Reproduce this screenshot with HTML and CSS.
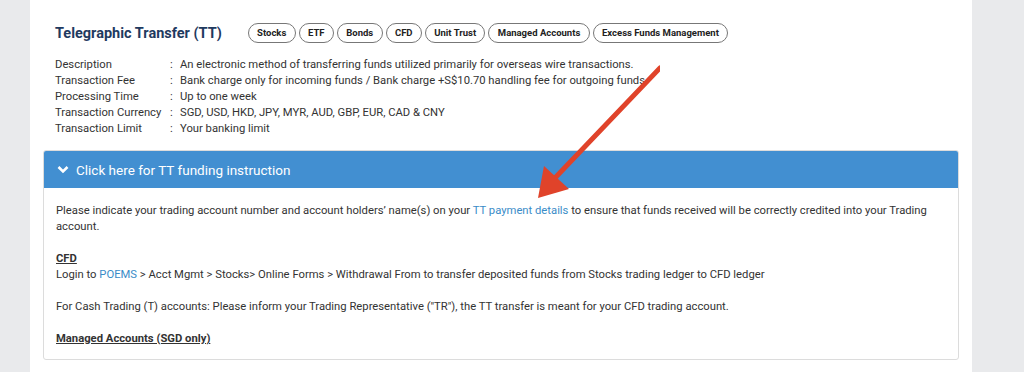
FILE: index.html
```html
<!DOCTYPE html>
<html lang="en">
<head>
  <meta charset="UTF-8" />
  <title>Telegraphic Transfer (TT)</title>
  <link rel="stylesheet" href="styles.css">
</head>
<body>
  <div class="page">
    <div class="card">
      <div class="title-row">
        <h2 class="title">Telegraphic Transfer (TT)</h2>
        <div class="pills">
          <span class="pill">Stocks</span>
          <span class="pill">ETF</span>
          <span class="pill">Bonds</span>
          <span class="pill">CFD</span>
          <span class="pill">Unit Trust</span>
          <span class="pill">Managed Accounts</span>
          <span class="pill">Excess Funds Management</span>
        </div>
      </div>

      <div class="info">
        <div class="k">Description</div><div class="c">:</div><div class="v">An electronic method of transferring funds utilized primarily for overseas wire transactions.</div>
        <div class="k">Transaction Fee</div><div class="c">:</div><div class="v">Bank charge only for incoming funds / Bank charge +S$10.70 handling fee for outgoing funds</div>
        <div class="k">Processing Time</div><div class="c">:</div><div class="v">Up to one week</div>
        <div class="k">Transaction Currency</div><div class="c">:</div><div class="v">SGD, USD, HKD, JPY, MYR, AUD, GBP, EUR, CAD &amp; CNY</div>
        <div class="k">Transaction Limit</div><div class="c">:</div><div class="v">Your banking limit</div>
      </div>

      <!-- accordion -->
      <div class="panel">
        <div class="panel-head">
          <svg class="chev" width="12" height="9" viewBox="0 0 12 9"><path d="M1.5 2 L6 6.5 L10.5 2" fill="none" stroke="#fff" stroke-width="2.6"/></svg>
          <span>Click here for TT funding instruction</span>
        </div>
        <div class="panel-body">
          <p>Please indicate your trading account number and account holders’ name(s) on your <a href="#">TT payment details</a> to ensure that funds received will be correctly credited into your Trading account.</p>
          <p><b class="u">CFD</b><br>Login to <a href="#">POEMS</a> &gt; Acct Mgmt &gt; Stocks&gt; Online Forms &gt; Withdrawal From to transfer deposited funds from Stocks trading ledger to CFD ledger</p>
          <p>For Cash Trading (T) accounts: Please inform your Trading Representative ("TR"), the TT transfer is meant for your CFD trading account.</p>
          <p><b class="u">Managed Accounts (SGD only)</b></p>
        </div>
      </div>

      <svg class="arrow" width="140" height="150" viewBox="520 55 140 150">
        <line x1="660" y1="68" x2="553" y2="180" stroke="#e0432a" stroke-width="5" stroke-linecap="round"/>
        <polygon points="538,198 544,166 569,189" fill="#e0432a"/>
      </svg>
    </div>
  </div>
</body>
</html>
```

FILE: styles.css
```css
body {
  margin: 0;
  background: #e9eaec;
  font-family: Roboto, "Liberation Sans", sans-serif;
  color: #2b2b2b;
}

.page {
  padding: 0 52px 0 30px;
}

.card {
  position: relative;
  background: #fff;
  height: 372px;
  padding: 23px 13px 0 13px;
  box-sizing: border-box;
}

.title-row {
  display: flex;
  align-items: center;
  padding-left: 12px;
  gap: 26px;
  height: 20px;
}

.title {
  margin: 0;
  font-size: 14.5px;
  font-weight: 700;
  color: #1f3a5f;
}

.pills {
  display: flex;
  gap: 3px;
}

.pill {
  border: 1px solid #777;
  border-radius: 10px;
  padding: 0 8.35px;
  height: 18px;
  line-height: 18px;
  font-size: 9.5px;
  font-weight: 700;
  color: #222;
}

.info {
  display: grid;
  grid-template-columns: 115px 10px 1fr;
  margin: 14px 0 0 12px;
  font-size: 11.25px;
  line-height: 16px;
  color: #333;
}

.panel {
  margin-top: 13px;
  border: 1px solid #dcdcdc;
  border-radius: 3px;
  overflow: hidden;
}

.panel-head {
  background: #428fd1;
  color: #fff;
  height: 37px;
  display: flex;
  align-items: center;
  padding-left: 13px;
  gap: 7px;
  font-size: 13.5px;
}

.panel-body {
  padding: 15px 12px 12px 12px;
  font-size: 11.25px;
  line-height: 16px;
  color: #333;
}

.panel-body p {
  margin: 0 0 16px 0;
}

.panel-body p:last-child {
  margin-bottom: 0;
}

.panel-body a {
  color: #3a8cc8;
  text-decoration: none;
}

.u {
  text-decoration: underline;
}

.arrow {
  position: absolute;
  left: 490px;
  top: 55px;
}
```
